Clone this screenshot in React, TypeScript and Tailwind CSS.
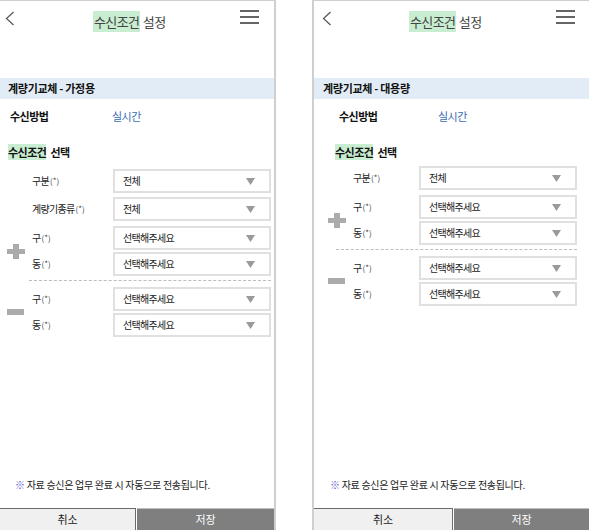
const font = "font-['Malgun_Gothic','Noto_Sans_CJK_KR',sans-serif]";

type Layout = {
  chevronX: string;
  titleMl: string;
  hamburgerMr: string;
  bandPl: string;
  methodPl: string;
  methodGap: string;
  condPl: string;
  rowPl: string;
  labelW: string;
  iconW: string;
  iconPl: string;
  noteMl: string;
  cancelW: string;
  selectTop: string;
  dashMx: string;
};

const Chevron = () => (
  <svg width="10" height="15" viewBox="0 0 10 15" fill="none">
    <path d="M8.5 1 L1.5 7.5 L8.5 14" stroke="#555" strokeWidth="1.2" />
  </svg>
);

const Hamburger = () => (
  <svg width="19" height="14" viewBox="0 0 19 14" fill="none">
    <path d="M0 1 H19 M0 7 H19 M0 13 H19" stroke="#333" strokeWidth="1.4" />
  </svg>
);

const Arrow = () => (
  <svg width="9" height="7" viewBox="0 0 9 7">
    <path d="M0 0 H9 L4.5 7 Z" fill="#9a9a9a" />
  </svg>
);

const Plus = () => (
  <svg width="18" height="15" viewBox="0 0 18 15">
    <path d="M6 0 H12 V5 H18 V10 H12 V15 H6 V10 H0 V5 H6 Z" fill="#ababab" />
  </svg>
);

const Minus = () => <div className="w-[17px] h-[6px] bg-[#ababab]" />;

function Select({ value }: { value: string }) {
  return (
    <div className="w-[158px] h-[24px] border-2 border-[#e0e0e0] bg-white flex items-center justify-between pl-[8px] pr-[14px]">
      <span className="text-[10px] tracking-[-0.7px] text-[#222] leading-none">{value}</span>
      <Arrow />
    </div>
  );
}

function Label({ text, w }: { text: string; w: string }) {
  return (
    <div className={`${w} text-[10px] tracking-[-0.7px] text-[#222] leading-none flex items-center`}>
      {text}
      <span className="text-[8px] tracking-normal text-[#444] ml-[1px]">(*)</span>
    </div>
  );
}

function Row({ label, value, w }: { label: string; value: string; w: string }) {
  return (
    <div className="flex items-center">
      <Label text={label} w={w} />
      <Select value={value} />
    </div>
  );
}

function Panel({ sub, extra, l }: { sub: string; extra: boolean; l: Layout }) {
  return (
    <div className="flex flex-col h-full w-full">
      {/* header */}
      <div className="h-[77px] flex items-start">
        <div className={`${l.chevronX} mt-[10px]`}>
          <Chevron />
        </div>
        <div className={`${l.titleMl} mt-[13px] text-[13px] tracking-[-0.6px] text-[#444] leading-[15px]`}>
          <span className="bg-[#c8edd1] px-[1px] py-[1px]">수신조건</span> 설정
        </div>
        <div className={`ml-auto ${l.hamburgerMr} mt-[9px]`}>
          <Hamburger />
        </div>
      </div>

      <div className={`h-[21px] bg-[#e2ecf7] flex items-center ${l.bandPl} text-[11px] tracking-[-0.3px] font-bold text-[#111]`}>
        계량기교체 - {sub}
      </div>

      <div className={`mt-[9px] flex items-center h-[16px] ${l.methodPl} text-[11px] tracking-[-0.5px]`}>
        <span className={`font-bold text-[#111] ${l.methodGap}`}>수신방법</span>
        <span className="text-[#3a6db5]">실시간</span>
      </div>

      <div className={`mt-[20px] h-[16px] flex items-center ${l.condPl} text-[11px] tracking-[-0.5px] font-bold text-[#111]`}>
        <span className="bg-[#c8edd1]">수신조건</span>
        <span className="ml-[4px]">선택</span>
      </div>

      <div className={`${l.selectTop} flex flex-col`}>
        <div className={`flex flex-col gap-[4px] ${l.rowPl}`}>
          <Row label="구분" value="전체" w={l.labelW} />
          {extra && <Row label="계량기종류" value="전체" w={l.labelW} />}
        </div>

        <div className="flex items-center mt-[5px]">
          <div className={`${l.iconW} ${l.iconPl} flex`}>
            <Plus />
          </div>
          <div className="flex flex-col gap-[2px]">
            <Row label="구" value="선택해주세요" w={l.labelW} />
            <Row label="동" value="선택해주세요" w={l.labelW} />
          </div>
        </div>

        <div className={`${l.dashMx} mt-[4px] border-t border-dashed border-[#bdbdbd]`} />

        <div className="flex items-center mt-[6px]">
          <div className={`${l.iconW} ${l.iconPl} flex`}>
            <Minus />
          </div>
          <div className="flex flex-col gap-[2px]">
            <Row label="구" value="선택해주세요" w={l.labelW} />
            <Row label="동" value="선택해주세요" w={l.labelW} />
          </div>
        </div>
      </div>

      <div className="flex-1" />

      <div className={`${l.noteMl} mb-[15px] text-[10px] tracking-[-0.3px] text-[#222] leading-[16px]`}>
        <span className="text-[#5c5ccf]">※</span> 자료 승신은 업무 완료 시 자동으로 전송됩니다.
      </div>

      <div className="h-[22px] flex">
        <div className={`${l.cancelW} h-full bg-[#f0f0f0] border-t border-r border-[#6b6b6b] flex items-center justify-center text-[11px] text-[#222]`}>
          취소
        </div>
        <div className="flex-1 ml-[1px] h-full bg-[#7f7f7f] border-t border-[#bdbdbd] flex items-center justify-center text-[11px] text-white">
          저장
        </div>
      </div>
    </div>
  );
}

const leftLayout: Layout = {
  chevronX: 'ml-[5px]',
  titleMl: 'ml-[78px]',
  hamburgerMr: 'mr-[15px]',
  bandPl: 'pl-[8px]',
  methodPl: 'pl-[10px]',
  methodGap: 'w-[102px]',
  condPl: 'pl-[8px]',
  rowPl: 'pl-[32px]',
  labelW: 'w-[81px]',
  iconW: 'w-[32px]',
  iconPl: 'pl-[7px]',
  noteMl: 'ml-[15px]',
  cancelW: 'w-[136px]',
  selectTop: 'mt-[9px]',
  dashMx: 'ml-[29px] w-[242px]',
};

const rightLayout: Layout = {
  chevronX: 'ml-[8px]',
  titleMl: 'ml-[77px]',
  hamburgerMr: 'mr-[14px]',
  bandPl: 'pl-[9px]',
  methodPl: 'pl-[25px]',
  methodGap: 'w-[99px]',
  condPl: 'pl-[21px]',
  rowPl: 'pl-[39px]',
  labelW: 'w-[66px]',
  iconW: 'w-[39px]',
  iconPl: 'pl-[14px]',
  noteMl: 'ml-[16px]',
  cancelW: 'w-[139px]',
  selectTop: 'mt-[6px]',
  dashMx: 'ml-[22px] w-[241px]',
};

export default function App() {
  return (
    <div className={`${font} w-[589px] h-[530px] bg-white flex overflow-hidden`}>
      <div className="w-[276px] h-full border-t border-r-2 border-[#cfcfcf]">
        <Panel sub="가정용" extra l={leftLayout} />
      </div>
      <div className="w-[36px]" />
      <div className="flex-1 h-full border-t border-l-2 border-[#cfcfcf]">
        <Panel sub="대용량" extra={false} l={rightLayout} />
      </div>
    </div>
  );
}
